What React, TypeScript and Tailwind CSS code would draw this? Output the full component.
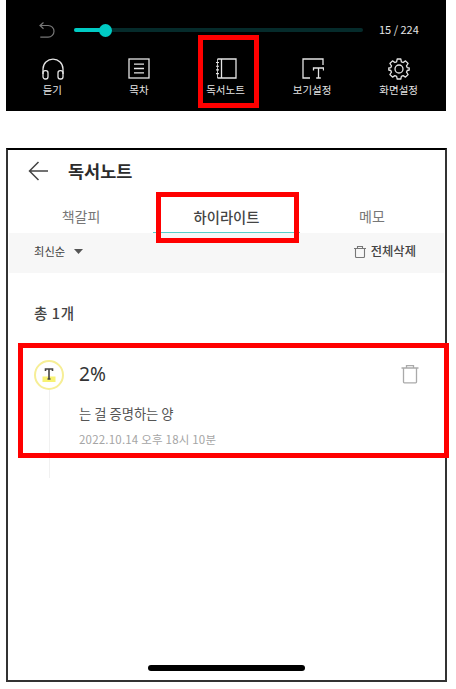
import type { ReactNode } from "react";
import clsx from "clsx";

function Icon({
  size = 22,
  className,
  children,
}: {
  size?: number;
  className?: string;
  children: ReactNode;
}) {
  return (
    <svg
      width={size}
      height={size}
      viewBox={`0 0 ${size} ${size}`}
      fill="none"
      stroke="currentColor"
      strokeWidth="1.3"
      className={className}
    >
      {children}
    </svg>
  );
}

const menu = [
  {
    label: "듣기",
    icon: (
      <Icon>
        <path d="M1 16V11a10 9.8 0 0 1 20 0v5" />
        <rect x="1" y="12.7" width="5" height="8.3" rx="2.2" />
        <rect x="16" y="12.7" width="5" height="8.3" rx="2.2" />
      </Icon>
    ),
  },
  {
    label: "목차",
    icon: (
      <Icon>
        <rect x="1" y="1" width="20" height="19" />
        <path d="M6 6.1h10M6 10.5h10M6 14.9h10" />
      </Icon>
    ),
  },
  {
    label: "독서노트",
    icon: (
      <Icon>
        <path d="M2.5 1H21v19H2.5M6.5 1v19" />
        <path d="M2.5 1v19" strokeWidth="0.8" />
        <path d="M1 4.5h3M1 8.2h3M1 11.9h3M1 15.6h3" strokeWidth="1.1" />
      </Icon>
    ),
  },
  {
    label: "보기설정",
    icon: (
      <Icon>
        <path d="M8 20H1V1h20v6" />
        <path d="M11.5 12.5V10h10v2.500M16.500 10v10M14.200 20h4.600" />
      </Icon>
    ),
  },
  {
    label: "화면설정",
    icon: (
      <Icon>
        <circle cx="11" cy="11" r="4" />
        <path
          strokeLinejoin="round"
          d="M9.2 1h3.6l.6 2.8 1.7.7 2.4-1.6 2.6 2.6-1.6 2.4.7 1.7 2 .4v2l-2 .5-.7 1.7 1.6 2.3-2.6 2.6-2.4-1.5-1.7.7-.6 2.7H9.2l-.6-2.7-1.7-.7-2.4 1.5-2.6-2.6 1.6-2.3-.7-1.7-2-.5v-2l2-.4.7-1.7L1.900 5.500l2.600-2.600 2.400 1.600 1.700-.7z"
        />
      </Icon>
    ),
  },
];

function Trash({ className }: { className?: string }) {
  return (
    <svg
      viewBox="0 0 18 20"
      fill="none"
      stroke="currentColor"
      strokeWidth="1.3"
      className={className}
    >
      <path d="M.5 4h17M5.5 3.6V1.7h7v1.9M2.5 4v14q0 .8.8.8h11.4q.8 0 .8-.8V4" />
    </svg>
  );
}

function Marker({ className }: { className: string }) {
  return (
    <div
      className={clsx("pointer-events-none absolute border-5 border-[#ff0000]", className)}
    />
  );
}

function ReaderControls() {
  return (
    <section className="ml-1.5 h-[111px] w-[440px] bg-black pt-5 text-[#e4e4e4]">
      <div className="flex h-5 items-center pl-8">
        <Icon size={18} className="text-[#777]">
          <path d="M5.5 1.5 2 4.5l3.5 3.2M2 4.5h8.2a5.7 5.7 0 0 1 0 11.6H2.3" strokeWidth="1.2" />
        </Icon>
        <div className="relative ml-[18px] flex h-3 w-[289px] items-center">
          <div className="h-1 w-full rounded-full bg-[#052b2b]">
            <div className="h-1 w-[31px] rounded-full bg-[#00cbc4]" />
          </div>
          <div className="absolute left-[25px] size-[13px] rounded-full bg-[#00cbc4]" />
        </div>
        <span className="ml-4 -translate-y-px text-[11px] whitespace-nowrap">15 / 224</span>
      </div>
      <nav className="ml-[3px] grid w-[433px] grid-cols-5 pt-[18px]">
        {menu.map((item) => (
          <div key={item.label} className="flex flex-col items-center">
            <div className="pl-px">{item.icon}</div>
            <span className="mt-0.5 text-[10.5px] leading-4 whitespace-nowrap">
              {item.label}
            </span>
          </div>
        ))}
      </nav>
    </section>
  );
}

function NotesPanel() {
  return (
    <section className="mt-[37px] ml-1.5 flex h-[534px] w-[441px] flex-col border-2 border-[#333] border-t-black bg-white text-[#444]">
      <header className="flex h-[42px] items-center pl-5">
        <svg width="21" height="20" fill="none" stroke="#444" strokeWidth="1.5">
          <path d="M10.5 1 1.5 10l9 9M1.5 10H20" />
        </svg>
        <h1 className="ml-[19px] text-[17.5px] leading-none font-bold text-[#2c2c2c]">독서노트</h1>
      </header>

      <div className="mx-px flex h-[41px] text-[14px] leading-[49px]">
        <div className="w-[144px] text-center text-[#777]">책갈피</div>
        <div className="h-[42px] w-[147px] border-b-2 border-[#56cfca] text-center text-[14.3px] font-medium text-[#444]">
          하이라이트
        </div>
        <div className="w-[144px] text-center text-[#777]">메모</div>
      </div>

      <div className="mx-px flex h-10 shrink-0 items-center justify-between bg-[#f7f7f7] pr-7 pb-1 pl-[25px]">
        <div className="flex items-center text-[11.3px]">
          최신순
          <svg width="9" height="5" className="ml-[9px]" fill="#555">
            <path d="M0 0h9L4.5 5z" />
          </svg>
        </div>
        <div className="flex items-center gap-[5px] text-[12.3px] font-medium">
          <svg width="12" height="13" fill="none" stroke="#777" strokeWidth="1.1">
            <path d="M0 3.500h12M3.500 3.500V1.500h5v2M1.500 3.500v8q0 1 1 1h7q1 0 1-1v-8" />
          </svg>
          전체삭제
        </div>
      </div>

      <div className="flex-1 pr-[26px] pl-[26px]">
        <p className="mt-[29px] h-[22px] text-[14.5px] leading-[22px] font-medium tracking-[0.6px]">
          총 1개
        </p>
        <article className="mt-9 flex items-start">
          <div className="flex flex-col items-center">
            <svg width="30" height="30" fill="none">
              <circle cx="15" cy="15" r="14" stroke="#f6ee96" strokeWidth="2" />
              <rect x="8.5" y="16.5" width="13" height="5.5" fill="#f8f272" />
              <path d="M11.500 11V9h7v2M15 9v10.500M13.500 19h3" stroke="#444" strokeWidth="1.6" />
            </svg>
            <div className="h-[88px] w-px bg-[#f1f1f1]" />
          </div>
          <div className="ml-[15px] flex-1">
            <h2 className="h-7 font-['Noto_Sans',sans-serif] text-[19.2px] leading-7 text-[#333]">
              2%
            </h2>
            <p className="mt-4 text-[13.3px] leading-5 text-[#555]">는 걸 증명하는 양</p>
            <time className="mt-[5px] block text-[11.5px] leading-5 tracking-[0.2px] text-[#a5a5a5]">
              2022.10.14 오후 18시 10분
            </time>
          </div>
          <Trash className="mt-1 h-5 w-[18px] text-[#aaa]" />
        </article>
      </div>

      <div className="mb-[9px] ml-[140px] h-1.5 w-[157px] rounded-full bg-black" />
    </section>
  );
}

export default function App() {
  return (
    <main className="relative h-[689px] w-[456px] overflow-hidden bg-white font-['Noto_Sans_CJK_KR',sans-serif]">
      <ReaderControls />
      <NotesPanel />
      <Marker className="top-[35px] left-[198px] h-[73px] w-[61px]" />
      <Marker className="top-[192px] left-[156px] h-[51px] w-[143px]" />
      <Marker className="top-[343px] left-[18px] h-[115px] w-[431px]" />
    </main>
  );
}
